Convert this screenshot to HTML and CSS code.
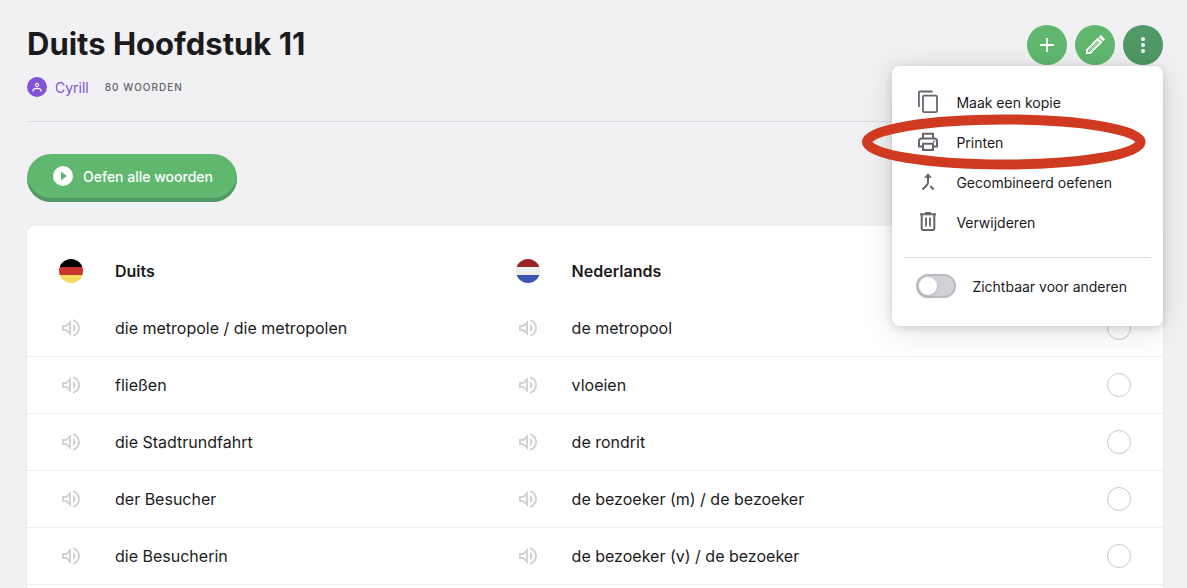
FILE: index.html
```html
<!DOCTYPE html>
<html lang="nl">
<head>
    <meta charset="UTF-8">
    <meta name="viewport" content="width=device-width, initial-scale=1.0">
    <title>Duits Hoofdstuk 11</title>
    <link rel="stylesheet" href="styles.css">
</head>
<body>

<svg class="sprite" aria-hidden="true">
    <symbol id="speaker" viewBox="0 0 24 24">
        <path d="M3 9v6h4l5 5V4L7 9H3zm7-.17v6.34L7.83 13H5v-2h2.83L10 8.83zM16.5 12c0-1.77-1.02-3.29-2.5-4.03v8.05c1.48-.73 2.5-2.25 2.5-4.02zM14 3.23v2.06c2.89.86 5 3.54 5 6.71s-2.11 5.85-5 6.71v2.06c4.01-.91 7-4.49 7-8.77s-2.99-7.86-7-8.77z" fill="currentColor"/>
    </symbol>
</svg>

<div class="container">
    <header class="header">
        <div class="title">
            <h1>Duits Hoofdstuk 11</h1>
            <div class="meta">
                <a href="#" class="author">
                    <svg class="avatar" viewBox="0 0 20 20" aria-hidden="true">
                        <circle cx="10" cy="10" r="10" fill="#8352d6"/>
                        <circle cx="10" cy="8" r="1.6" fill="none" stroke="#fff" stroke-width="1.1"/>
                        <path d="M6 14.6v-.6c0-1.8 1.8-2.6 4-2.6s4 .8 4 2.6v.6" fill="none" stroke="#fff" stroke-width="1.2"/>
                    </svg>
                    Cyrill
                </a>
                <span class="count">80 WOORDEN</span>
            </div>
        </div>
        <div class="actions">
            <button class="round" aria-label="Toevoegen">
                <svg class="icon" viewBox="0 0 24 24"><path d="M12 5v14M5 12h14" stroke="currentColor" stroke-width="2"/></svg>
            </button>
            <button class="round" aria-label="Bewerken">
                <svg class="icon" viewBox="0 0 24 24">
                    <path d="M4 20v-3.2L14.8 6l3.2 3.2L7.2 20z" fill="none" stroke="currentColor" stroke-width="2"/>
                    <path d="M6 18L16 8" stroke="currentColor" stroke-width=".8"/>
                    <path d="M15.7 4L17 2.7c.5-.5 1.100-.5 1.600 0l2.700 2.700c.5.5.5 1.100 0 1.600L20 8.300z" fill="currentColor"/>
                </svg>
            </button>
            <button class="round open" aria-label="Meer">
                <svg class="icon" viewBox="0 0 24 24" fill="currentColor"><circle cx="12" cy="6" r="2"/><circle cx="12" cy="12" r="2"/><circle cx="12" cy="18" r="2"/></svg>
            </button>

            <div class="menu">
                <button class="item">
                    <svg class="icon" viewBox="0 0 24 24" fill="none" stroke="currentColor" stroke-width="1.8">
                        <path d="M2.900 17V2.500c0-.6.4-1 1-1H16.500"/>
                        <rect x="7" y="5.600" width="14" height="16.600" rx="1.200"/>
                    </svg>
                    Maak een kopie
                </button>
                <button class="item marked">
                    <svg class="icon" viewBox="0 0 24 24" fill="none" stroke="currentColor" stroke-width="2">
                        <path d="M7 8V3.700h10V8"/>
                        <path d="M6.500 16.500H3V11c0-1.500 1-2.500 2.500-2.500h13c1.500 0 2.500 1 2.500 2.500v5.500h-3.500"/>
                        <path d="M7 13.800h10V20H7z"/>
                        <circle cx="18" cy="11.500" r="1" fill="currentColor" stroke="none"/>
                    </svg>
                    Printen
                    <svg class="ring" viewBox="0 0 284 56" preserveAspectRatio="none" aria-hidden="true">
                        <ellipse cx="142" cy="28" rx="137" ry="22.500" fill="none" stroke="#d03a20" stroke-width="10"/>
                    </svg>
                </button>
                <button class="item">
                    <svg class="icon" viewBox="0 0 24 24" fill="none" stroke="currentColor" stroke-width="2">
                        <path d="M6.500 19.500l4.200-4.200c.9-.9 1.300-1.500 1.300-2.800V6"/>
                        <path d="M14.300 16l3.300 3.500"/>
                        <path d="M8 7.800l4-4.600 4 4.600z" fill="currentColor" stroke="none"/>
                    </svg>
                    Gecombineerd oefenen
                </button>
                <button class="item">
                    <svg class="icon" viewBox="0 0 24 24" fill="none" stroke="currentColor" stroke-width="2">
                        <path d="M4 4.200h16M9 3h6"/>
                        <path d="M5.700 4.500v14.200c0 .8.500 1.300 1.300 1.300h10c.8 0 1.300-.5 1.300-1.300V4.500"/>
                        <path d="M10 7.500v9M14 7.500v9" stroke-width="1.800"/>
                    </svg>
                    Verwijderen
                </button>
                <hr>
                <label class="item">
                    <input type="checkbox" class="switch">
                    Zichtbaar voor anderen
                </label>
            </div>
        </div>
    </header>

    <button class="practice">
        <svg class="icon" viewBox="0 0 24 24" aria-hidden="true">
            <circle cx="12" cy="12" r="10" fill="#fff"/>
            <path d="M10 7.500v9l6-4.500z" fill="#60b86f"/>
        </svg>
        Oefen alle woorden
    </button>

    <div class="card">
        <table class="words">
            <colgroup>
                <col class="col-icon">
                <col class="col-term">
                <col class="col-icon2">
                <col>
                <col class="col-check">
            </colgroup>
            <thead>
                <tr>
                    <td>
                        <svg class="icon flag" viewBox="0 0 24 24" aria-hidden="true">
                            <path d="M0 0h24v8H0z" fill="#000"/>
                            <path d="M0 8h24v8H0z" fill="#c93630"/>
                            <path d="M0 16h24v8H0z" fill="#f3db60"/>
                        </svg>
                    </td>
                    <th>Duits</th>
                    <td>
                        <svg class="icon flag" viewBox="0 0 24 24" aria-hidden="true">
                            <path d="M0 0h24v8H0z" fill="#962626"/>
                            <path d="M0 8h24v8H0z" fill="#efefef"/>
                            <path d="M0 16h24v8H0z" fill="#3854b4"/>
                        </svg>
                    </td>
                    <th>Nederlands</th>
                    <td></td>
                </tr>
            </thead>
            <tbody>
                <tr>
                    <td><button class="play" aria-label="Luister"><svg class="icon"><use href="#speaker"/></svg></button></td>
                    <td>die metropole / die metropolen</td>
                    <td><button class="play" aria-label="Luister"><svg class="icon"><use href="#speaker"/></svg></button></td>
                    <td>de metropool</td>
                    <td><input type="checkbox" class="check" aria-label="de metropool"></td>
                </tr>
                <tr>
                    <td><button class="play" aria-label="Luister"><svg class="icon"><use href="#speaker"/></svg></button></td>
                    <td>fließen</td>
                    <td><button class="play" aria-label="Luister"><svg class="icon"><use href="#speaker"/></svg></button></td>
                    <td>vloeien</td>
                    <td><input type="checkbox" class="check" aria-label="vloeien"></td>
                </tr>
                <tr>
                    <td><button class="play" aria-label="Luister"><svg class="icon"><use href="#speaker"/></svg></button></td>
                    <td>die Stadtrundfahrt</td>
                    <td><button class="play" aria-label="Luister"><svg class="icon"><use href="#speaker"/></svg></button></td>
                    <td>de rondrit</td>
                    <td><input type="checkbox" class="check" aria-label="de rondrit"></td>
                </tr>
                <tr>
                    <td><button class="play" aria-label="Luister"><svg class="icon"><use href="#speaker"/></svg></button></td>
                    <td>der Besucher</td>
                    <td><button class="play" aria-label="Luister"><svg class="icon"><use href="#speaker"/></svg></button></td>
                    <td>de bezoeker (m) / de bezoeker</td>
                    <td><input type="checkbox" class="check" aria-label="de bezoeker (m)"></td>
                </tr>
                <tr>
                    <td><button class="play" aria-label="Luister"><svg class="icon"><use href="#speaker"/></svg></button></td>
                    <td>die Besucherin</td>
                    <td><button class="play" aria-label="Luister"><svg class="icon"><use href="#speaker"/></svg></button></td>
                    <td>de bezoeker (v) / de bezoeker</td>
                    <td><input type="checkbox" class="check" aria-label="de bezoeker (v)"></td>
                </tr>
            </tbody>
        </table>
    </div>
</div>

</body>
</html>
```
FILE: styles.css
```css
* {
    box-sizing: border-box;
}

body {
    font-family: Inter, 'Noto Sans', sans-serif;
    font-size: 16px;
    margin: 0;
    color: #1b1b1d;
    background-color: #f1f1f4;
}

button {
    font: inherit;
    border: none;
    padding: 0;
    background: none;
    cursor: pointer;
}

.sprite {
    display: none;
}

.icon {
    display: block;
    width: 24px;
    height: 24px;
    flex: none;
}

.container {
    display: flex;
    flex-direction: column;
    min-height: 100vh;
    padding: 24px 24px 0 27px;
}

.header {
    display: flex;
    justify-content: space-between;
    align-items: flex-start;
    padding-bottom: 24px;
    margin-bottom: 32px;
    border-bottom: 1px solid #dcdce0;
}

h1 {
    margin: 0 0 13px;
    font-size: 31px;
    line-height: 40px;
    font-weight: 700;
}

.meta {
    display: flex;
    align-items: center;
    gap: 16px;
    height: 20px;
}

.author {
    display: flex;
    align-items: center;
    gap: 8px;
    font-size: 14px;
    color: #8352d6;
    text-decoration: none;
}

.avatar {
    width: 20px;
    height: 20px;
}

.count {
    font-size: 10px;
    font-weight: 500;
    letter-spacing: 1px;
    color: #65656f;
}

.actions {
    position: relative;
    display: flex;
    gap: 8px;
    padding-top: 1px;
}

.round {
    display: flex;
    align-items: center;
    justify-content: center;
    width: 40px;
    height: 40px;
    border-radius: 50%;
    color: #fff;
    background-color: #60b86f;
}

.round.open {
    background-color: #509865;
}

.menu {
    position: absolute;
    top: 42px;
    right: 0;
    z-index: 1;
    padding: 16px 0 20px;
    border-radius: 8px;
    background-color: #fff;
    box-shadow: 0 4px 32px rgba(0, 0, 0, 0.12), 0 2px 8px rgba(0, 0, 0, 0.14);
}

.item {
    position: relative;
    display: flex;
    align-items: center;
    gap: 16px;
    width: 100%;
    height: 40px;
    padding: 0 36px 0 24px;
    font-size: 14px;
    white-space: nowrap;
    color: #1b1b1d;
}

.item .icon {
    color: #65656f;
}

.marked {
    z-index: 1;
}

.ring {
    position: absolute;
    top: -8px;
    left: -30px;
    width: calc(100% + 13px);
    height: 56px;
}

.menu hr {
    margin: 15px 12px 8px;
    border: none;
    border-top: 1px solid #dedee2;
}

.switch {
    appearance: none;
    width: 40px;
    height: 24px;
    margin: 0;
    padding: 1px;
    border: 2px solid #bcbbc1;
    border-radius: 12px;
    background-color: #d2d1d7;
}

.switch::before {
    content: '';
    display: block;
    width: 18px;
    height: 18px;
    border-radius: 50%;
    background-color: #fff;
    box-shadow: 0 2px 4px rgba(0, 0, 0, 0.1);
}

.practice {
    display: flex;
    align-items: center;
    align-self: flex-start;
    gap: 8px;
    height: 48px;
    padding: 0 24px 4px;
    margin-bottom: 24px;
    border-radius: 24px;
    font-size: 14px;
    font-weight: 500;
    color: #fff;
    background-color: #60b86f;
    box-shadow: inset 0 -4px #509865;
}

.card {
    flex: 1;
    border-radius: 8px 8px 0 0;
    background-color: #fff;
    box-shadow: 0 1px 2px rgba(0, 0, 0, 0.08);
}

.words {
    width: 100%;
    table-layout: fixed;
    border-collapse: separate;
    border-spacing: 0;
}

.col-icon {
    width: 88px;
}

.col-term {
    width: 35%;
}

.col-icon2 {
    width: 59px;
}

.col-check {
    width: 56px;
}

.words td,
.words th {
    height: 57px;
    padding: 0;
    text-align: left;
    border-bottom: 1px solid #efeff1;
}

.words th,
.words thead td {
    height: 74px;
    padding-top: 16px;
    font-weight: 600;
    border-bottom: none;
}

.words td:first-child {
    padding-left: 32px;
}

.words td:nth-child(3) {
    padding-left: 3px;
}

.flag {
    border-radius: 50%;
}

.play {
    display: block;
    color: #d2d2d7;
}

.check {
    appearance: none;
    display: block;
    width: 24px;
    height: 24px;
    margin: 0;
    border: 1px solid #c8c8cc;
    border-radius: 50%;
}
```
